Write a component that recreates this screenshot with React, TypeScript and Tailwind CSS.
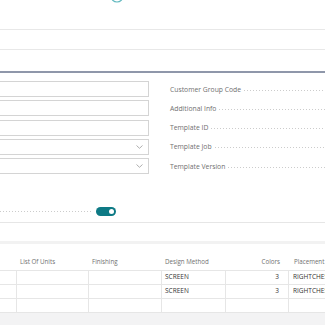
import React from "react";

const Leader = () => (
  <div className="flex-1 h-px ml-[3px] bg-[linear-gradient(to_right,#cccccc_1px,transparent_1px)] bg-[length:3px_1px] bg-repeat-x" />
);

const Chevron = () => (
  <svg width="7" height="4" viewBox="0 0 7 4" className="mr-[5px]">
    <polyline points="0.5,0.5 3.5,3.3 6.5,0.5" fill="none" stroke="#9a9a9a" strokeWidth="0.8" />
  </svg>
);

const Input = ({ select }: { select?: boolean }) => (
  <div className="h-[16px] w-[150px] -ml-px border border-[#d4d4d4] bg-white flex items-center justify-end">
    {select && <Chevron />}
  </div>
);

const labels = [
  "Customer Group Code",
  "Additional Info",
  "Template ID",
  "Template Job",
  "Template Version",
];

const cols = "grid grid-cols-[17px_72px_73px_64px_63px_60px]";

export default function App() {
  const font = { fontFamily: '"Open Sans", "Noto Sans", sans-serif' };
  return (
    <div className="w-[325px] h-[325px] overflow-hidden bg-white text-[#707070]" style={font}>
      {/* top bar */}
      <div className="h-[29px] overflow-hidden border-b border-[#e8e8e8] box-content -mb-px">
        <svg width="14" height="14" viewBox="0 0 14 14" className="ml-[110px] -mt-[11px]">
          <circle cx="7" cy="7" r="6" fill="none" stroke="#62b9bf" strokeWidth="1.2" />
        </svg>
      </div>
      <div className="h-[21px] border-b border-[#e8e8e8]" />
      <div className="h-[23px] border-b-2 border-[#8f97aa]" />

      {/* form */}
      <div className="flex pt-[8px]">
        <div className="w-[160px] flex flex-col gap-[3.3px]">
          <Input />
          <Input />
          <Input />
          <Input select />
          <Input select />
        </div>
        <div className="flex-1 flex flex-col gap-[3.3px] pl-[10px] pt-[1px]">
          {labels.map((l) => (
            <div key={l} className="h-[16px] flex items-center">
              <span className="text-[6.8px] leading-none whitespace-nowrap">{l}</span>
              <Leader />
            </div>
          ))}
        </div>
      </div>

      {/* toggle row */}
      <div className="flex items-center h-[10px] mt-[31px] w-[116px]">
        <div className="flex-1 h-px mr-[3px] bg-[linear-gradient(to_right,#cccccc_1px,transparent_1px)] bg-[length:3px_1px] bg-repeat-x" />
        <div className="w-[20px] h-[9px] rounded-full bg-[#0e7a85] flex items-center justify-end pr-[2px]">
          <div className="w-[5px] h-[5px] rounded-full bg-white" />
        </div>
      </div>
      <div className="mt-[6px] border-b border-[#e6e6e6]" />
      <div className="mt-[18px] h-[3px] bg-[#f2f2f2]" />

      {/* table */}
      <div className="text-[6.2px] leading-none">
        <div className={`${cols} h-[27px] items-end pb-[5px] border-b border-[#e6e6e6]`}>
          <div />
          <div className="pl-[3px]">List Of Units</div>
          <div className="pl-[3px]">Finishing</div>
          <div className="pl-[3px]">Design Method</div>
          <div className="text-right pr-[9px]">Colors</div>
          <div className="pl-[5px] whitespace-nowrap">Placement</div>
        </div>
        {[
          ["SCREEN", "3", "RIGHTCHEST"],
          ["SCREEN", "3", "RIGHTCHEST"],
          ["", "", ""],
        ].map((r, i) => (
          <div key={i} className={`${cols} h-[14px] border-b border-[#e6e6e6] text-[#333333] text-[6.5px]`}>
            <div className="border-r border-[#e6e6e6]" />
            <div className="border-r border-[#e6e6e6]" />
            <div className="border-r border-[#e6e6e6]" />
            <div className="border-r border-[#e6e6e6] pl-[3px] flex items-center">{r[0]}</div>
            <div className="border-r border-[#e6e6e6] pr-[9px] flex items-center justify-end">{r[1]}</div>
            <div className="pl-[4px] flex items-center whitespace-nowrap overflow-hidden">{r[2]}</div>
          </div>
        ))}
        <div className="h-[20px] bg-[#f3f3f4]" />
      </div>
    </div>
  );
}
